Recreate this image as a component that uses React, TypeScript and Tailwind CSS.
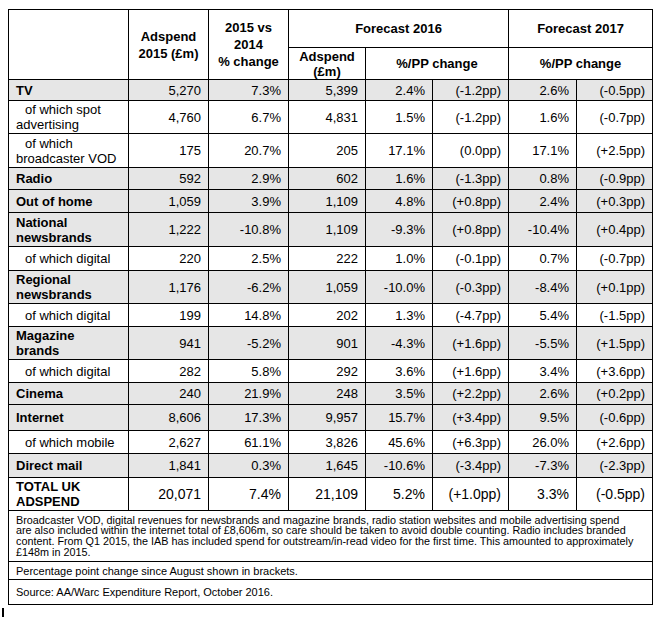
type Row = {
  label: string[]
  bold?: boolean
  grey?: boolean
  sub?: boolean
  total?: boolean
  h: string
  v: string[]
}

const rows: Row[] = [
  { label: ['TV'], bold: true, grey: true, h: 'h-[21px]', v: ['5,270', '7.3%', '5,399', '2.4%', '(-1.2pp)', '2.6%', '(-0.5pp)'] },
  { label: ['of which spot', 'advertising'], sub: true, h: 'h-[33px]', v: ['4,760', '6.7%', '4,831', '1.5%', '(-1.2pp)', '1.6%', '(-0.7pp)'] },
  { label: ['of which', 'broadcaster VOD'], sub: true, h: 'h-[34px]', v: ['175', '20.7%', '205', '17.1%', '(0.0pp)', '17.1%', '(+2.5pp)'] },
  { label: ['Radio'], bold: true, grey: true, h: 'h-[22px]', v: ['592', '2.9%', '602', '1.6%', '(-1.3pp)', '0.8%', '(-0.9pp)'] },
  { label: ['Out of home'], bold: true, grey: true, h: 'h-[23px]', v: ['1,059', '3.9%', '1,109', '4.8%', '(+0.8pp)', '2.4%', '(+0.3pp)'] },
  { label: ['National', 'newsbrands'], bold: true, grey: true, h: 'h-[34px]', v: ['1,222', '-10.8%', '1,109', '-9.3%', '(+0.8pp)', '-10.4%', '(+0.4pp)'] },
  { label: ['of which digital'], sub: true, h: 'h-[24px]', v: ['220', '2.5%', '222', '1.0%', '(-0.1pp)', '0.7%', '(-0.7pp)'] },
  { label: ['Regional', 'newsbrands'], bold: true, grey: true, h: 'h-[33px]', v: ['1,176', '-6.2%', '1,059', '-10.0%', '(-0.3pp)', '-8.4%', '(+0.1pp)'] },
  { label: ['of which digital'], sub: true, h: 'h-[23px]', v: ['199', '14.8%', '202', '1.3%', '(-4.7pp)', '5.4%', '(-1.5pp)'] },
  { label: ['Magazine', 'brands'], bold: true, grey: true, h: 'h-[33px]', v: ['941', '-5.2%', '901', '-4.3%', '(+1.6pp)', '-5.5%', '(+1.5pp)'] },
  { label: ['of which digital'], sub: true, h: 'h-[23px]', v: ['282', '5.8%', '292', '3.6%', '(+1.6pp)', '3.4%', '(+3.6pp)'] },
  { label: ['Cinema'], bold: true, grey: true, h: 'h-[22px]', v: ['240', '21.9%', '248', '3.5%', '(+2.2pp)', '2.6%', '(+0.2pp)'] },
  { label: ['Internet'], bold: true, grey: true, h: 'h-[26px]', v: ['8,606', '17.3%', '9,957', '15.7%', '(+3.4pp)', '9.5%', '(-0.6pp)'] },
  { label: ['of which mobile'], sub: true, h: 'h-[23px]', v: ['2,627', '61.1%', '3,826', '45.6%', '(+6.3pp)', '26.0%', '(+2.6pp)'] },
  { label: ['Direct mail'], bold: true, grey: true, h: 'h-[24px]', v: ['1,841', '0.3%', '1,645', '-10.6%', '(-3.4pp)', '-7.3%', '(-2.3pp)'] },
  { label: ['TOTAL UK', 'ADSPEND'], bold: true, total: true, h: 'h-[33px]', v: ['20,071', '7.4%', '21,109', '5.2%', '(+1.0pp)', '3.3%', '(-0.5pp)'] },
]

const notes = [
  'Broadcaster VOD, digital revenues for newsbrands and magazine brands, radio station websites and mobile advertising spend',
  'are also included within the internet total of £8,606m, so care should be taken to avoid double counting. Radio includes branded',
  'content. From Q1 2015, the IAB has included spend for outstream/in-read video for the first time. This amounted to approximately',
  '£148m in 2015.',
]

export default function App() {
  return (
    <div className="w-[660px] h-[617px] bg-white pt-[9px] pl-[8px] text-black font-['Liberation_Sans',Arial,sans-serif] overflow-hidden">
      <table className="table-fixed border-collapse w-[644px]">
        <colgroup>
          <col className="w-[120px]" />
          <col className="w-[80px]" />
          <col className="w-[80px]" />
          <col className="w-[77px]" />
          <col className="w-[67px]" />
          <col className="w-[76px]" />
          <col className="w-[68px]" />
          <col className="w-[76px]" />
        </colgroup>
        <thead className="font-bold text-[13px] leading-[17px] text-center">
          <tr className="h-[38px]">
            <th rowSpan={2} className="border border-black"></th>
            <th rowSpan={2} className="border border-black font-bold">Adspend<br />2015 (£m)</th>
            <th rowSpan={2} className="border border-black font-bold">2015 vs<br />2014<br />% change</th>
            <th colSpan={3} className="border border-black font-bold">Forecast 2016</th>
            <th colSpan={2} className="border border-black font-bold">Forecast 2017</th>
          </tr>
          <tr className="h-[32px]">
            <th className="border border-black font-bold leading-[15px]">Adspend<br />(£m)</th>
            <th colSpan={2} className="border border-black font-bold">%/PP change</th>
            <th colSpan={2} className="border border-black font-bold">%/PP change</th>
          </tr>
        </thead>
        <tbody className="text-[13px] leading-[15px]">
          {rows.map((r, i) => (
            <tr key={i} className={`${r.h} ${r.grey ? 'bg-[#e6e6e6]' : 'bg-white'}`}>
              <td className={`border border-black pl-[7px] pr-1 align-middle ${r.bold ? 'font-bold' : ''}`}>
                {r.label.map((l, j) => (
                  <div key={j} className={r.sub && j === 0 ? 'pl-[9px] whitespace-nowrap' : 'whitespace-nowrap'}>{l}</div>
                ))}
              </td>
              {r.v.map((v, j) => (
                <td key={j} className={`border border-black pr-[7px] text-right whitespace-nowrap align-middle ${r.total ? 'text-[14px]' : ''}`}>{v}</td>
              ))}
            </tr>
          ))}
          <tr className="h-[51px]">
            <td colSpan={8} className="border border-black pl-[7px] text-[10.8px] leading-[10.7px] align-middle">
              {notes.map((n, i) => (
                <div key={i} className="whitespace-nowrap">{n}</div>
              ))}
            </td>
          </tr>
          <tr className="h-[18px]">
            <td colSpan={8} className="border border-black pl-[7px] text-[11px] leading-[12px] align-middle">Percentage point change since August shown in brackets.</td>
          </tr>
          <tr className="h-[25px]">
            <td colSpan={8} className="border border-black pl-[7px] text-[11px] leading-[12px] align-middle">Source: AA/Warc Expenditure Report, October 2016.</td>
          </tr>
        </tbody>
      </table>
      <div className="-ml-[6px] mt-[3px] w-[2px] h-[10px] bg-black"></div>
    </div>
  )
}
